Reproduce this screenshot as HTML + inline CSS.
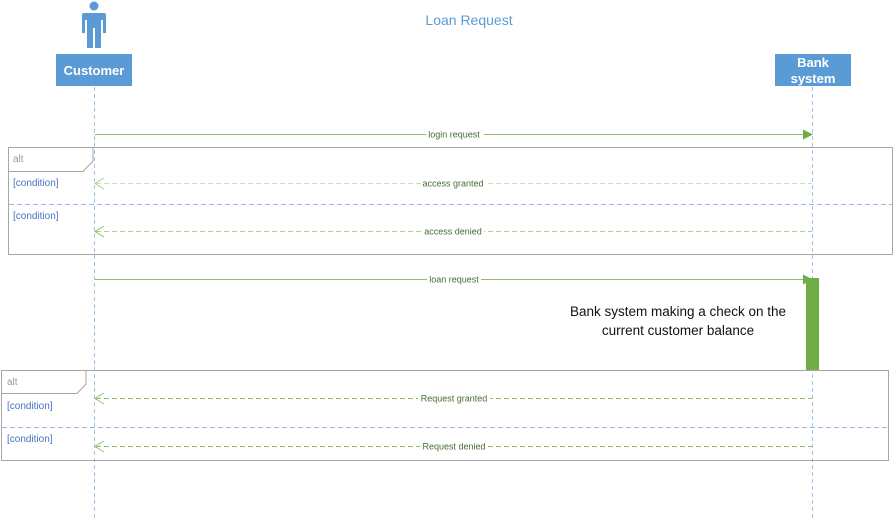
<!DOCTYPE html>
<html><head><meta charset="utf-8"><style>
html,body{margin:0;padding:0;background:#fff;width:895px;height:519px;overflow:hidden}
svg{display:block;font-family:"Liberation Sans",sans-serif}
</style></head><body>
<svg width="895" height="519" viewBox="0 0 895 519" xmlns="http://www.w3.org/2000/svg">
<text x="469" y="25" text-anchor="middle" font-size="14" fill="#5b9bd5">Loan Request</text>
<g fill="#5b9bd5">
<circle cx="94" cy="6" r="4.5"/>
<path d="M84 13 H104 Q106 13 106 15 V33 H103 V20 H101 V48 H95 V28 H93 V48 H87 V20 H85 V33 H82 V15 Q82 13 84 13 Z"/>
</g>
<rect x="56" y="54" width="76" height="32" fill="#5b9bd5"/>
<text x="94" y="75" text-anchor="middle" font-size="13" font-weight="bold" fill="#fff">Customer</text>
<rect x="775" y="54" width="76" height="32" fill="#5b9bd5"/>
<text x="813" y="67" text-anchor="middle" font-size="13" font-weight="bold" fill="#fff">Bank</text>
<text x="813" y="83" text-anchor="middle" font-size="13" font-weight="bold" fill="#fff">system</text>
<g stroke="#9dc3e6" stroke-width="1" stroke-dasharray="4,3">
<line x1="94.5" y1="87" x2="94.5" y2="519"/>
<line x1="812.5" y1="87" x2="812.5" y2="519"/>
</g>
<rect x="8.5" y="147.5" width="884" height="107" fill="none" stroke="#a6a6a6"/>
<path d="M8.5 171.5 H83 L93 161 V147.5" fill="none" stroke="#a6a6a6"/>
<text x="13" y="162" font-size="10" fill="#999">alt</text>
<line x1="9" y1="204.5" x2="892" y2="204.5" stroke="#9db4e0" stroke-dasharray="5,3"/>
<text x="13" y="186" font-size="10" fill="#4472c4">[condition]</text>
<text x="13" y="219" font-size="10" fill="#4472c4">[condition]</text>
<rect x="1.5" y="370.5" width="887" height="90" fill="none" stroke="#a6a6a6"/>
<path d="M1.5 393.5 H77 L86 384 V370.5" fill="none" stroke="#a6a6a6"/>
<text x="7" y="385" font-size="10" fill="#999">alt</text>
<line x1="2" y1="427.5" x2="888" y2="427.5" stroke="#9db4e0" stroke-dasharray="5,3"/>
<text x="7" y="409" font-size="10" fill="#4472c4">[condition]</text>
<text x="7" y="442" font-size="10" fill="#4472c4">[condition]</text>
<g font-size="9" fill="#4a6b30" text-anchor="middle">
<line x1="95" y1="134.5" x2="804" y2="134.5" stroke="#8fbf6a"/>
<path d="M803 129.5 L813 134.5 L803 139.5 Z" fill="#70ad47"/>
<rect x="426" y="129" width="58" height="11" fill="#fff"/>
<text x="454" y="137.5">login request</text>
<line x1="96" y1="183.5" x2="812" y2="183.5" stroke="#c5e0b4" stroke-dasharray="5,3"/>
<path d="M104 178 L95 183.5 L104 189" fill="none" stroke="#a9d18e"/>
<rect x="423" y="178" width="62" height="11" fill="#fff"/>
<text x="453" y="186.5">access granted</text>
<line x1="96" y1="231.5" x2="812" y2="231.5" stroke="#a9d18e" stroke-dasharray="5,3"/>
<path d="M104 226 L95 231.5 L104 237" fill="none" stroke="#8fbf6a"/>
<rect x="424" y="226" width="60" height="11" fill="#fff"/>
<text x="453" y="234.5">access denied</text>
<line x1="95" y1="279.5" x2="804" y2="279.5" stroke="#8fbf6a"/>
<path d="M803 274.5 L813 279.5 L803 284.5 Z" fill="#70ad47"/>
<rect x="427" y="274" width="54" height="11" fill="#fff"/>
<text x="454" y="282.5">loan request</text>
<line x1="96" y1="398.5" x2="812" y2="398.5" stroke="#8fbf6a" stroke-dasharray="5,3"/>
<path d="M104 393 L95 398.5 L104 404" fill="none" stroke="#8fbf6a"/>
<rect x="418" y="393" width="72" height="11" fill="#fff"/>
<text x="454" y="401.5">Request granted</text>
<line x1="96" y1="446.5" x2="812" y2="446.5" stroke="#8fbf6a" stroke-dasharray="5,3"/>
<path d="M104 441 L95 446.5 L104 452" fill="none" stroke="#8fbf6a"/>
<rect x="420" y="441" width="68" height="11" fill="#fff"/>
<text x="454" y="449.5">Request denied</text>
</g>
<rect x="806" y="278" width="13" height="92" fill="#70ad47"/>
<g font-size="13.5" fill="#111" text-anchor="middle">
<text x="678" y="316">Bank system making a check on the</text>
<text x="678" y="335">current customer balance</text>
</g>
</svg>
</body></html>
